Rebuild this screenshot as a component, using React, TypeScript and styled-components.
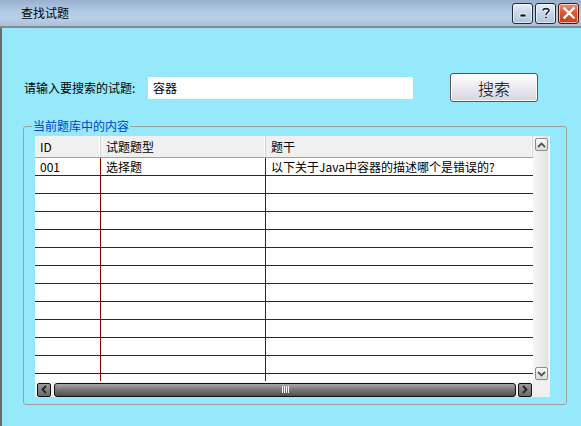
import React from "react";
import styled, { createGlobalStyle } from "styled-components";

const Global = createGlobalStyle`
  html, body { margin: 0; padding: 0; }
  body {
    font-family: "Noto Sans CJK SC", "Noto Sans", sans-serif;
    font-size: 12px;
    color: #000;
  }
`;

const Window = styled.div`
  width: 581px;
  height: 426px;
  display: flex;
  flex-direction: column;
  overflow: hidden;
`;

const TitleBar = styled.div`
  height: 26px;
  flex-shrink: 0;
  display: flex;
  align-items: center;
  padding: 0 2px 0 21px;
  background: linear-gradient(180deg, #98b0cd 0%, #b4cbe5 45%, #b9cfe8 70%, #a9c0dc 100%);
  border-bottom: 2px solid #848b93;
`;

const Title = styled.div`
  flex: 1;
  font-size: 12px;
  line-height: 14px;
`;

const TitleButtons = styled.div`
  display: flex;
  gap: 2px;
`;

const CaptionButton = styled.div<{ $close?: boolean }>`
  width: 21px;
  height: 21px;
  box-sizing: border-box;
  border: 1px solid ${(p) => (p.$close ? "#4a1c10" : "#1d2b3d")};
  border-radius: 3px;
  background: ${(p) =>
    p.$close
      ? "linear-gradient(180deg, #ee9070 0%, #d8532f 50%, #c8401e 100%)"
      : "linear-gradient(180deg, #e4eef8 0%, #c4d6ea 50%, #aec4de 100%)"};
  box-shadow: inset 0 0 0 1px rgba(255, 255, 255, 0.6);
  display: flex;
  align-items: center;
  justify-content: center;
`;

const Body = styled.div`
  flex: 1;
  background: #96e9fb;
  border-left: 2px solid #6b6b6b;
  display: flex;
  flex-direction: column;
  padding-left: 21px;
`;

const SearchRow = styled.div`
  margin-top: 45px;
  height: 29px;
  display: flex;
  align-items: center;
  padding-left: 1px;
`;

const Label = styled.div`
  width: 124px;
  font-size: 12px;
`;

const SearchInput = styled.input`
  width: 265px;
  height: 22px;
  box-sizing: border-box;
  border: none;
  outline: none;
  background: #fff;
  padding: 0 0 0 5px;
  font-family: "Noto Sans CJK SC", sans-serif;
  font-size: 12px;
  color: #000;
`;

const SearchButton = styled.button`
  margin-left: 37px;
  width: 88px;
  height: 29px;
  box-sizing: border-box;
  border: 1px solid #555;
  border-radius: 3px;
  background: linear-gradient(180deg, #ffffff 0%, #f0eff5 40%, #d6d3e2 100%);
  box-shadow: inset 0 0 0 1px #fff;
  font-family: "Noto Sans CJK SC", sans-serif;
  font-size: 16px;
  font-weight: 300;
  color: #000;
  padding: 0;
`;

const GroupBox = styled.div`
  margin-top: 24px;
  width: 544px;
  height: 279px;
  box-sizing: border-box;
  border: 1px solid #a0a0a0;
  border-radius: 3px;
  position: relative;
  padding: 9px 0 0 11px;
`;

const Legend = styled.div`
  position: absolute;
  top: -8px;
  left: 8px;
  padding: 0 1px;
  background: #96e9fb;
  color: #0044d0;
  font-size: 12px;
  line-height: 14px;
`;

const Table = styled.div`
  width: 515px;
  height: 261px;
  display: grid;
  grid-template-columns: 498px 17px;
  grid-template-rows: 245px 16px;
  background: #fff;
`;

const GridArea = styled.div`
  overflow: hidden;
`;

const COLS = "66px 165px 267px";

const HeaderRow = styled.div`
  display: grid;
  grid-template-columns: ${COLS};
  height: 22px;
  box-sizing: border-box;
  border-bottom: 1px solid #a0a0a0;
  background: #f0f0f0;
`;

const HeaderCell = styled.div`
  display: flex;
  align-items: center;
  padding-left: 5px;
  border-right: 1px solid #d4d4d4;
  box-shadow: inset -1px 0 0 #fff;
`;

const DataRow = styled.div`
  display: grid;
  grid-template-columns: ${COLS};
  height: 18px;
  box-sizing: border-box;
  border-bottom: 1px solid #880000;
`;

const Cell = styled.div<{ $last?: boolean }>`
  display: flex;
  align-items: center;
  padding-left: 5px;
  white-space: nowrap;
  overflow: hidden;
  border-right: ${(p) => (p.$last ? "none" : "1px solid #880000")};
`;

const VScroll = styled.div`
  background: linear-gradient(90deg, #f6f6f6 0%, #e4e4e4 85%, #fff 100%);
  display: flex;
  flex-direction: column;
  justify-content: space-between;
  padding: 2px 2px 1px 2px;
`;

const ArrowBox = styled.div`
  width: 13px;
  height: 13px;
  box-sizing: border-box;
  border: 1px solid #8c8c8c;
  border-radius: 2px;
  background: linear-gradient(180deg, #fafafa 0%, #dcdcdc 100%);
  display: flex;
  align-items: center;
  justify-content: center;
`;

const HScroll = styled.div`
  display: flex;
  align-items: center;
  padding: 0 1px 0 2px;
  background: #f4f4f4;
  border-top: 1px solid #fff;
`;

const DarkArrow = styled.div`
  width: 14px;
  height: 14px;
  box-sizing: border-box;
  border: 1px solid #111;
  border-radius: 2px;
  background: linear-gradient(180deg, #9a9a9a 0%, #6a6a6a 100%);
  display: flex;
  align-items: center;
  justify-content: center;
`;

const Thumb = styled.div`
  flex: 1;
  margin: 0 2px 0 3px;
  height: 14px;
  box-sizing: border-box;
  border: 1px solid #111;
  border-radius: 3px;
  background: linear-gradient(180deg, #a8a8a8 0%, #7a7a7a 45%, #4e4e4e 100%);
  display: flex;
  align-items: center;
  justify-content: center;
`;

const Grip = styled.div`
  display: flex;
  gap: 1px;
`;

const GripLine = styled.div`
  width: 1px;
  height: 7px;
  background: #fff;
`;

const Corner = styled.div`
  background: #f0f0f0;
`;

const rows = Array.from({ length: 13 }, (_, i) => i);

export default function App() {
  return (
    <Window>
      <Global />
      <TitleBar>
        <Title>查找试题</Title>
        <TitleButtons>
          <CaptionButton>
            <svg width="10" height="10" viewBox="0 0 10 10">
              <rect x="2" y="6" width="6" height="3" fill="#111" stroke="#fff" strokeWidth="0.8" />
            </svg>
          </CaptionButton>
          <CaptionButton>
            <svg width="12" height="14" viewBox="0 0 12 14">
              <path d="M3 4.5 C3 2 9 2 9 4.5 C9 6.5 6 6.5 6 9" fill="none" stroke="#fff" strokeWidth="3.2" />
              <path d="M3 4.5 C3 2 9 2 9 4.5 C9 6.5 6 6.5 6 9" fill="none" stroke="#1a2230" strokeWidth="1.6" />
              <rect x="4.8" y="10.3" width="2.4" height="2.4" fill="#1a2230" stroke="#fff" strokeWidth="0.6" />
            </svg>
          </CaptionButton>
          <CaptionButton $close>
            <svg width="14" height="14" viewBox="0 0 14 14">
              <path d="M2.5 2.5 L11.5 11.5 M11.5 2.5 L2.5 11.5" stroke="#fff" strokeWidth="2.4" strokeLinecap="square" />
            </svg>
          </CaptionButton>
        </TitleButtons>
      </TitleBar>
      <Body>
        <SearchRow>
          <Label>请输入要搜索的试题:</Label>
          <SearchInput defaultValue="容器" />
          <SearchButton>搜索</SearchButton>
        </SearchRow>
        <GroupBox>
          <Legend>当前题库中的内容</Legend>
          <Table>
            <GridArea>
              <HeaderRow>
                <HeaderCell>ID</HeaderCell>
                <HeaderCell>试题题型</HeaderCell>
                <HeaderCell>题干</HeaderCell>
              </HeaderRow>
              {rows.map((i) => (
                <DataRow key={i}>
                  <Cell>{i === 0 ? "001" : ""}</Cell>
                  <Cell>{i === 0 ? "选择题" : ""}</Cell>
                  <Cell $last>{i === 0 ? "以下关于Java中容器的描述哪个是错误的?" : ""}</Cell>
                </DataRow>
              ))}
            </GridArea>
            <VScroll>
              <ArrowBox>
                <svg width="9" height="6" viewBox="0 0 9 6">
                  <path d="M1 5 L4.5 1.5 L8 5" fill="none" stroke="#555" strokeWidth="1.8" />
                </svg>
              </ArrowBox>
              <ArrowBox>
                <svg width="9" height="6" viewBox="0 0 9 6">
                  <path d="M1 1 L4.5 4.5 L8 1" fill="none" stroke="#555" strokeWidth="1.8" />
                </svg>
              </ArrowBox>
            </VScroll>
            <HScroll>
              <DarkArrow>
                <svg width="6" height="9" viewBox="0 0 6 9">
                  <path d="M5 1 L1.5 4.5 L5 8" fill="none" stroke="#222" strokeWidth="1.8" />
                </svg>
              </DarkArrow>
              <Thumb>
                <Grip>
                  <GripLine />
                  <GripLine />
                  <GripLine />
                  <GripLine />
                </Grip>
              </Thumb>
              <DarkArrow>
                <svg width="6" height="9" viewBox="0 0 6 9">
                  <path d="M1 1 L4.5 4.5 L1 8" fill="none" stroke="#222" strokeWidth="1.8" />
                </svg>
              </DarkArrow>
            </HScroll>
            <Corner />
          </Table>
        </GroupBox>
      </Body>
    </Window>
  );
}
